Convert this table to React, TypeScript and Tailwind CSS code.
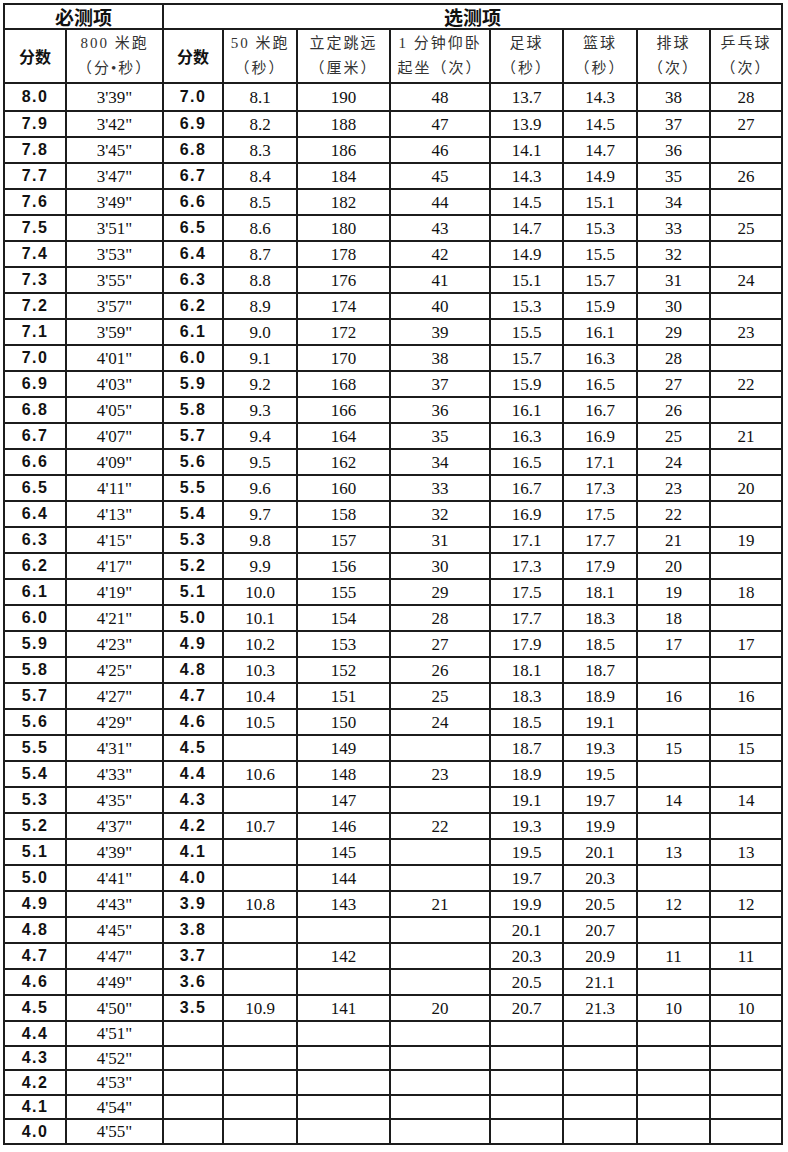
const rows: string[][] = [
  ["8.0", "3'39\"", "7.0", "8.1", "190", "48", "13.7", "14.3", "38", "28"],
  ["7.9", "3'42\"", "6.9", "8.2", "188", "47", "13.9", "14.5", "37", "27"],
  ["7.8", "3'45\"", "6.8", "8.3", "186", "46", "14.1", "14.7", "36", ""],
  ["7.7", "3'47\"", "6.7", "8.4", "184", "45", "14.3", "14.9", "35", "26"],
  ["7.6", "3'49\"", "6.6", "8.5", "182", "44", "14.5", "15.1", "34", ""],
  ["7.5", "3'51\"", "6.5", "8.6", "180", "43", "14.7", "15.3", "33", "25"],
  ["7.4", "3'53\"", "6.4", "8.7", "178", "42", "14.9", "15.5", "32", ""],
  ["7.3", "3'55\"", "6.3", "8.8", "176", "41", "15.1", "15.7", "31", "24"],
  ["7.2", "3'57\"", "6.2", "8.9", "174", "40", "15.3", "15.9", "30", ""],
  ["7.1", "3'59\"", "6.1", "9.0", "172", "39", "15.5", "16.1", "29", "23"],
  ["7.0", "4'01\"", "6.0", "9.1", "170", "38", "15.7", "16.3", "28", ""],
  ["6.9", "4'03\"", "5.9", "9.2", "168", "37", "15.9", "16.5", "27", "22"],
  ["6.8", "4'05\"", "5.8", "9.3", "166", "36", "16.1", "16.7", "26", ""],
  ["6.7", "4'07\"", "5.7", "9.4", "164", "35", "16.3", "16.9", "25", "21"],
  ["6.6", "4'09\"", "5.6", "9.5", "162", "34", "16.5", "17.1", "24", ""],
  ["6.5", "4'11\"", "5.5", "9.6", "160", "33", "16.7", "17.3", "23", "20"],
  ["6.4", "4'13\"", "5.4", "9.7", "158", "32", "16.9", "17.5", "22", ""],
  ["6.3", "4'15\"", "5.3", "9.8", "157", "31", "17.1", "17.7", "21", "19"],
  ["6.2", "4'17\"", "5.2", "9.9", "156", "30", "17.3", "17.9", "20", ""],
  ["6.1", "4'19\"", "5.1", "10.0", "155", "29", "17.5", "18.1", "19", "18"],
  ["6.0", "4'21\"", "5.0", "10.1", "154", "28", "17.7", "18.3", "18", ""],
  ["5.9", "4'23\"", "4.9", "10.2", "153", "27", "17.9", "18.5", "17", "17"],
  ["5.8", "4'25\"", "4.8", "10.3", "152", "26", "18.1", "18.7", "", ""],
  ["5.7", "4'27\"", "4.7", "10.4", "151", "25", "18.3", "18.9", "16", "16"],
  ["5.6", "4'29\"", "4.6", "10.5", "150", "24", "18.5", "19.1", "", ""],
  ["5.5", "4'31\"", "4.5", "", "149", "", "18.7", "19.3", "15", "15"],
  ["5.4", "4'33\"", "4.4", "10.6", "148", "23", "18.9", "19.5", "", ""],
  ["5.3", "4'35\"", "4.3", "", "147", "", "19.1", "19.7", "14", "14"],
  ["5.2", "4'37\"", "4.2", "10.7", "146", "22", "19.3", "19.9", "", ""],
  ["5.1", "4'39\"", "4.1", "", "145", "", "19.5", "20.1", "13", "13"],
  ["5.0", "4'41\"", "4.0", "", "144", "", "19.7", "20.3", "", ""],
  ["4.9", "4'43\"", "3.9", "10.8", "143", "21", "19.9", "20.5", "12", "12"],
  ["4.8", "4'45\"", "3.8", "", "", "", "20.1", "20.7", "", ""],
  ["4.7", "4'47\"", "3.7", "", "142", "", "20.3", "20.9", "11", "11"],
  ["4.6", "4'49\"", "3.6", "", "", "", "20.5", "21.1", "", ""],
  ["4.5", "4'50\"", "3.5", "10.9", "141", "20", "20.7", "21.3", "10", "10"],
  ["4.4", "4'51\"", "", "", "", "", "", "", "", ""],
  ["4.3", "4'52\"", "", "", "", "", "", "", "", ""],
  ["4.2", "4'53\"", "", "", "", "", "", "", "", ""],
  ["4.1", "4'54\"", "", "", "", "", "", "", "", ""],
  ["4.0", "4'55\"", "", "", "", "", "", "", "", ""],
];

const subHeads: [string, string][] = [
  ["50 米跑", "（秒）"],
  ["立定跳远", "（厘米）"],
  ["1 分钟仰卧", "起坐（次）"],
  ["足球", "（秒）"],
  ["篮球", "（秒）"],
  ["排球", "（次）"],
  ["乒乓球", "（次）"],
];

// shared cell classes
const cell = "border-2 border-[#1c1c1c] text-center align-middle p-0";
const scoreCls = `${cell} text-[16px] leading-none font-bold tracking-[1.5px] text-[#111] font-['Liberation_Sans','Noto_Sans_CJK_SC',sans-serif]`;
const valueCls = `${cell} text-[17px] leading-none text-[#111] font-['Liberation_Serif',serif]`;
const subHeadCls = `${cell} font-normal text-[15px] leading-[25px] tracking-[2px] text-[#333] font-['Liberation_Serif','Noto_Sans_CJK_SC',serif]`;
const boldHeadCls = `${cell} font-bold text-[#111] font-['Noto_Sans_CJK_SC',sans-serif]`;

function rowHeight(i: number) {
  if (i === 0) return "h-[28px]";
  if (i < 36) return "h-[26px]";
  return i % 2 === 0 ? "h-[25px]" : "h-[24px]";
}

export default function App() {
  return (
    <div className="bg-white min-h-[1152px] pt-[3px] pl-[3px]">
      <table className="table-fixed border-collapse w-[780px]">
        <colgroup>
          <col className="w-[62px]" />
          <col className="w-[97px]" />
          <col className="w-[60px]" />
          <col className="w-[74px]" />
          <col className="w-[93px]" />
          <col className="w-[100px]" />
          <col className="w-[73px]" />
          <col className="w-[74px]" />
          <col className="w-[73px]" />
          <col className="w-[72px]" />
        </colgroup>
        <thead>
          <tr className="h-[25px]">
            <th colSpan={2} className={`${boldHeadCls} text-[19px] leading-none`}>
              必测项
            </th>
            <th colSpan={8} className={`${boldHeadCls} text-[19px] leading-none`}>
              选测项
            </th>
          </tr>
          <tr className="h-[54px]">
            <th className={`${boldHeadCls} text-[16px]`}>分数</th>
            <th className={subHeadCls}>
              <div>800 米跑</div>
              <div>（分•秒）</div>
            </th>
            <th className={`${boldHeadCls} text-[16px]`}>分数</th>
            {subHeads.map(([a, b], i) => (
              <th key={i} className={subHeadCls}>
                <div>{a}</div>
                <div>{b}</div>
              </th>
            ))}
          </tr>
        </thead>
        <tbody>
          {rows.map((r, ri) => (
            <tr key={ri} className={rowHeight(ri)}>
              <td className={scoreCls}>{r[0]}</td>
              <td className={valueCls}>{r[1]}</td>
              <td className={scoreCls}>{r[2]}</td>
              {r.slice(3).map((v, ci) => (
                <td key={ci} className={valueCls}>
                  {v}
                </td>
              ))}
            </tr>
          ))}
        </tbody>
      </table>
    </div>
  );
}
